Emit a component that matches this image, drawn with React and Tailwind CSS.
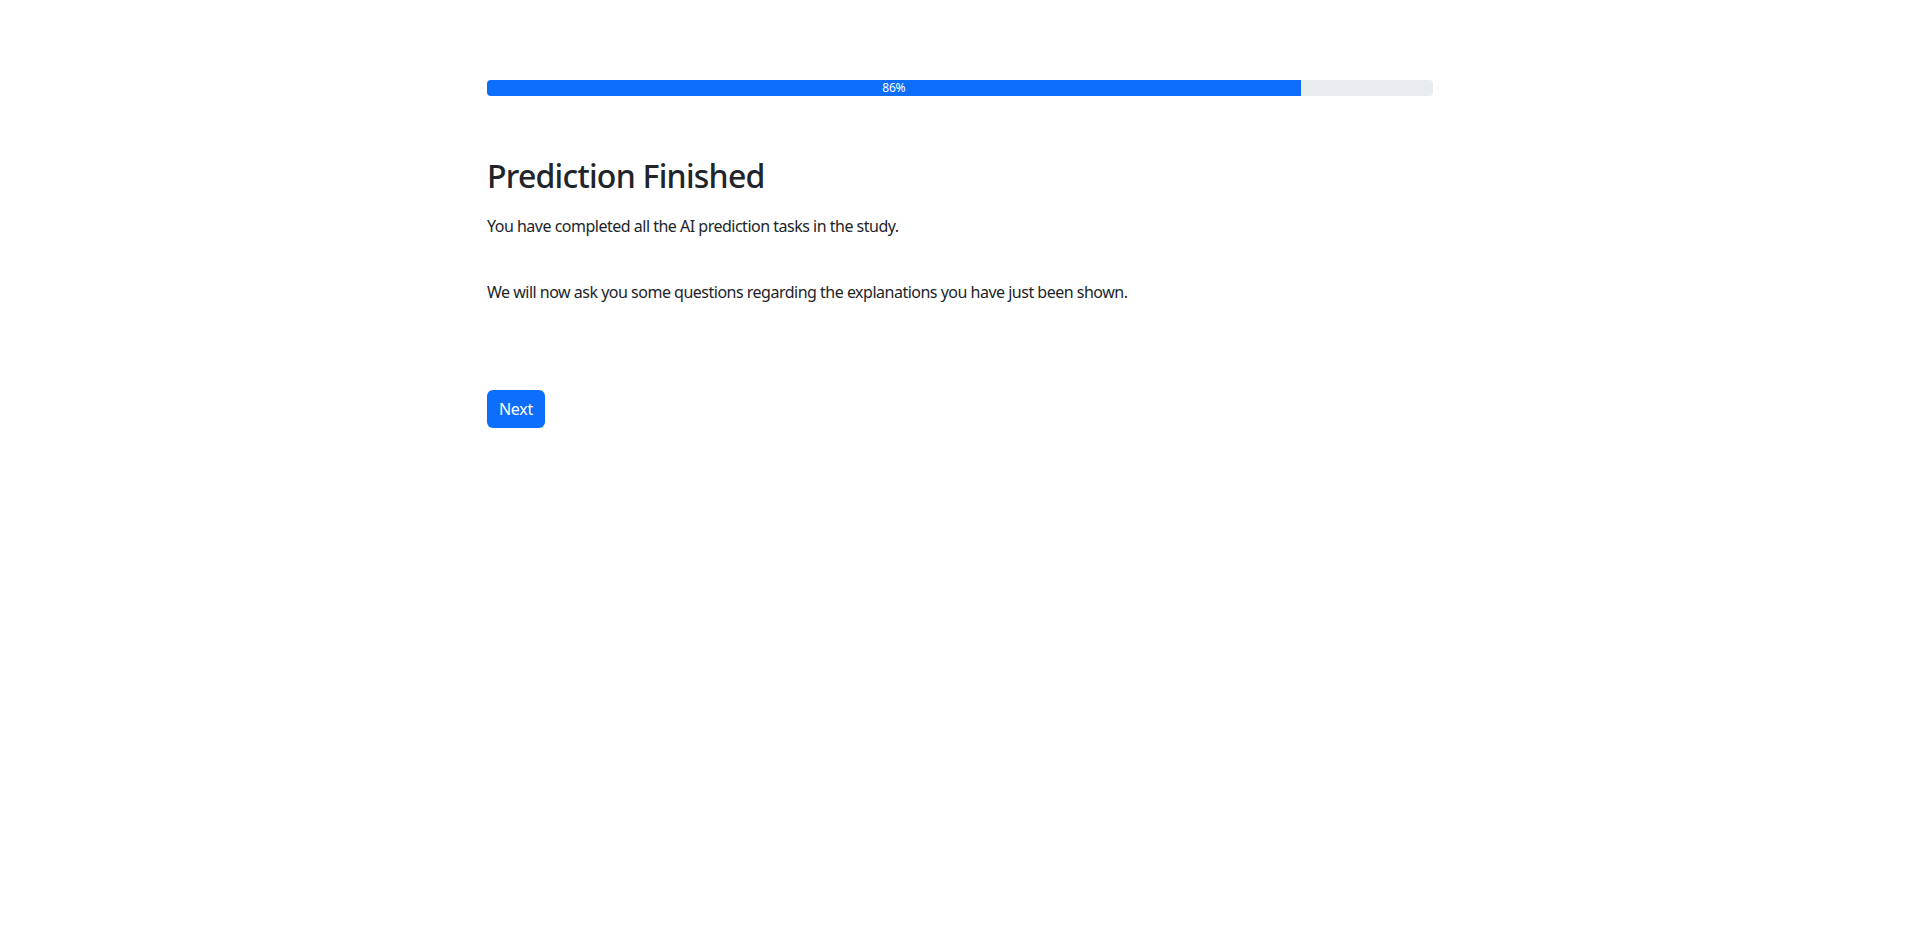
export default function App() {
  const progress = 86;

  return (
    <div className="min-h-screen bg-white text-[#212529] font-['Segoe_UI','Noto_Sans','Open_Sans',sans-serif]">
      <div className="w-[946px] mx-auto pt-[80px]">
        {/* Progress */}
        <div className="h-4 bg-[#e9ecef] rounded overflow-hidden flex">
          <div
            className="bg-[#0d6efd] text-white text-[12px] leading-4 text-center tracking-[-0.3px]"
            style={{ width: `${progress}%` }}
          >
            {progress}%
          </div>
        </div>

        <h2 className="mt-[61px] text-[32px] leading-[38px] font-medium tracking-[-0.75px]">Prediction Finished</h2>
        <p className="mt-[19px] text-base leading-6 tracking-[-0.5px]">You have completed all the AI prediction tasks in the study.</p>
        <p className="mt-[42px] text-base leading-6 tracking-[-0.5px]">
          We will now ask you some questions regarding the explanations you have just been shown.
        </p>

        <button className="mt-[86px] bg-[#0d6efd] text-white text-base leading-6 px-3 py-[7px] rounded-md tracking-[-0.3px]">
          Next
        </button>
      </div>
    </div>
  );
}
